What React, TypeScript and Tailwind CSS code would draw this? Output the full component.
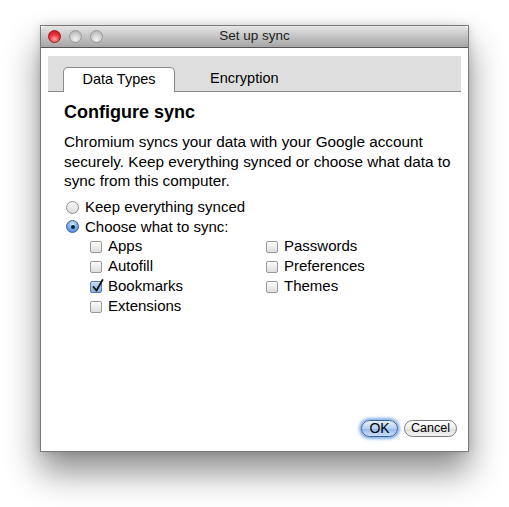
import React from "react";

const font = { fontFamily: '"Liberation Sans", Arial, Helvetica, sans-serif' };

function Radio({ checked }: { checked?: boolean }) {
  return checked ? (
    <span className="relative inline-block w-[13px] h-[13px] rounded-full border border-[#3a5f9c] bg-[radial-gradient(circle_at_50%_30%,#d5e8fb_0%,#7fb2ea_45%,#3d7fd6_100%)]">
      <span className="absolute left-[4px] top-[4px] w-[4px] h-[4px] rounded-full bg-[#10203a]" />
    </span>
  ) : (
    <span className="inline-block w-[13px] h-[13px] rounded-full border border-[#8e8e8e] bg-[linear-gradient(#f8f8f8,#dcdcdc)]" />
  );
}

function Check({ checked }: { checked?: boolean }) {
  return (
    <span
      className={
        "relative inline-block w-[12px] h-[12px] rounded-[2px] border " +
        (checked
          ? "border-[#5a7aa8] bg-[linear-gradient(#c7dcf5,#86aee0)]"
          : "border-[#9a9a9a] bg-[linear-gradient(#fbfbfb,#dedede)]")
      }
    >
      {checked && (
        <svg className="absolute left-[1px] top-[-3px]" width="12" height="13" viewBox="0 0 12 13">
          <path d="M1.5 8 L4.5 11.5 L10.5 1" fill="none" stroke="#111" strokeWidth="1.8" strokeLinecap="round" strokeLinejoin="round" />
        </svg>
      )}
    </span>
  );
}

function CheckRow({ label, checked }: { label: string; checked?: boolean }) {
  return (
    <div className="flex items-center h-[20px]">
      <Check checked={checked} />
      <span className="ml-[6px]">{label}</span>
    </div>
  );
}

export default function App() {
  return (
    <div className="w-[509px] h-[507px] bg-white pt-[25px] pl-[40px]" style={font}>
      <div className="w-[429px] h-[427px] flex flex-col border border-[#7a7a7a] bg-white shadow-[0_20px_32px_rgba(0,0,0,0.45),0_0_8px_rgba(0,0,0,0.15)]">
        {/* Title bar */}
        <div className="relative h-[22px] flex items-center justify-center bg-[linear-gradient(#e6e6e6,#bdbdbd_60%,#a7a7a7)] border-b border-[#555] rounded-t-[4px]">
          <div className="absolute left-[7px] top-[4px] flex gap-[8px]">
            <span className="w-[13px] h-[13px] rounded-full border border-[#9c1a1a] bg-[radial-gradient(circle_at_50%_75%,#ffb0b0_0%,#f0383d_45%,#b80f14_100%)]" />
            <span className="w-[13px] h-[13px] rounded-full border border-[#9a9a9a] bg-[radial-gradient(circle_at_50%_75%,#f2f2f2_0%,#d0d0d0_50%,#aaaaaa_100%)]" />
            <span className="w-[13px] h-[13px] rounded-full border border-[#9a9a9a] bg-[radial-gradient(circle_at_50%_75%,#f2f2f2_0%,#d0d0d0_50%,#aaaaaa_100%)]" />
          </div>
          <span className="text-[13.5px] text-[#222]">Set up sync</span>
        </div>

        {/* Content */}
        <div className="flex-1 flex flex-col px-[7px] pt-[8px] pb-[14px] text-[15px] text-black">
          {/* Tabs */}
          <div className="h-[36px] bg-[#dedede] border-b border-[#8a8a8a] flex items-end pl-[15px]">
            <div className="w-[112px] h-[25px] -mb-px bg-white border border-b-0 border-[#8a8a8a] rounded-t-[5px] flex items-center justify-center text-[14.5px]">
              Data Types
            </div>
            <div className="h-[25px] ml-[35px] flex items-center text-[14.5px]">Encryption</div>
          </div>

          <div className="pl-[16px] flex-1 flex flex-col">
            <div className="mt-[9px] text-[18px] font-bold leading-[22px]">Configure sync</div>
            <p className="mt-[9px] pr-[8px] leading-[19.5px] text-[15.3px]">
              Chromium syncs your data with your Google account securely. Keep everything synced or choose what data to sync from this computer.
            </p>

            <div className="mt-[7px] flex flex-col">
              <div className="flex items-center h-[19.5px] pl-[2px]">
                <Radio />
                <span className="ml-[6px]">Keep everything synced</span>
              </div>
              <div className="flex items-center h-[19.5px] pl-[2px]">
                <Radio checked />
                <span className="ml-[6px]">Choose what to sync:</span>
              </div>
              <div className="grid grid-cols-[176px_auto] pl-[26px]">
                <div className="flex flex-col">
                  <CheckRow label="Apps" />
                  <CheckRow label="Autofill" />
                  <CheckRow label="Bookmarks" checked />
                  <CheckRow label="Extensions" />
                </div>
                <div className="flex flex-col">
                  <CheckRow label="Passwords" />
                  <CheckRow label="Preferences" />
                  <CheckRow label="Themes" />
                </div>
              </div>
            </div>

            <div className="flex-1" />
            <div className="flex justify-end gap-[6px] pr-[4px]">
              <button className="h-[17px] w-[37px] rounded-full border border-[#3c5f91] bg-[linear-gradient(#e4effc,#b5d0f2_50%,#93b9ea_51%,#c9defa)] shadow-[0_0_3px_2px_rgba(80,140,220,0.7)] text-[14px] leading-[15px] flex items-center justify-center">
                OK
              </button>
              <button className="h-[17px] w-[53px] rounded-full border border-[#7a7a7a] bg-[linear-gradient(#ffffff,#ececec_50%,#dcdcdc_51%,#f4f4f4)] text-[12.5px] leading-[15px] flex items-center justify-center">
                Cancel
              </button>
            </div>
          </div>
        </div>
      </div>
    </div>
  );
}
